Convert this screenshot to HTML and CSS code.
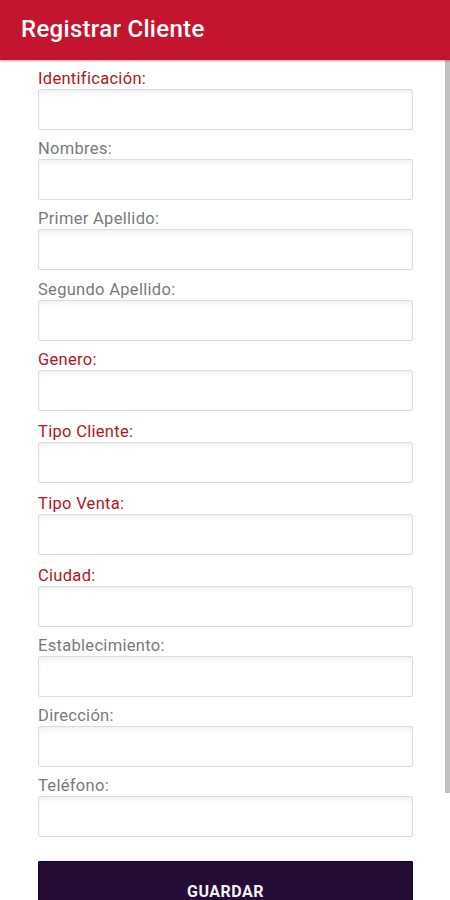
FILE: index.html
```html
<!DOCTYPE html>
<html lang="es">
<head>
<meta charset="utf-8">
<title>Registrar Cliente</title>
<link rel="stylesheet" href="styles.css">
</head>
<body>
<header class="appbar">
  <h1 class="title">Registrar Cliente</h1>
</header>
<main class="content">
  <form class="form">
    <div class="field"><label class="label req">Identificación:</label><input class="input" type="text"></div>
    <div class="field"><label class="label">Nombres:</label><input class="input" type="text"></div>
    <div class="field"><label class="label">Primer Apellido:</label><input class="input" type="text"></div>
    <div class="field mt1"><label class="label">Segundo Apellido:</label><input class="input" type="text"></div>
    <div class="field"><label class="label req">Genero:</label><input class="input" type="text"></div>
    <div class="field mt2"><label class="label req">Tipo Cliente:</label><input class="input" type="text"></div>
    <div class="field mt2"><label class="label req">Tipo Venta:</label><input class="input" type="text"></div>
    <div class="field mt2"><label class="label req">Ciudad:</label><input class="input" type="text"></div>
    <div class="field"><label class="label">Establecimiento:</label><input class="input" type="text"></div>
    <div class="field"><label class="label">Dirección:</label><input class="input" type="text"></div>
    <div class="field"><label class="label">Teléfono:</label><input class="input" type="text"></div>
    <button class="save" type="button">GUARDAR</button>
  </form>
  <div class="scroll-thumb"></div>
</main>
</body>
</html>
```

FILE: styles.css
```css
html, body {
  margin: 0;
  padding: 0;
  height: 900px;
  overflow: hidden;
  background: #ffffff;
  font-family: Roboto, "Liberation Sans", Arial, sans-serif;
}

.appbar {
  height: 60px;
  background: #c4152f;
  display: flex;
  align-items: center;
  padding-left: 21px;
  box-shadow: 0 1px 2px rgba(0, 0, 0, 0.35);
  position: relative;
  z-index: 2;
}

.title {
  margin: 0;
  color: #ffffff;
  font-size: 24px;
  font-weight: 500;
  letter-spacing: 0.3px;
  line-height: 1;
  padding-bottom: 2px;
}

.content {
  position: relative;
}

.form {
  display: flex;
  flex-direction: column;
  padding: 9px 37px 0 38px;
}

.field {
  display: flex;
  flex-direction: column;
  margin-bottom: 9px;
}

.mt1 { margin-top: 1px; }
.mt2 { margin-top: 2px; }

.label {
  font-size: 16.5px;
  line-height: 20px;
  letter-spacing: 0.3px;
  color: #7a7a7a;
}

.label.req {
  color: #b3141f;
}

.input {
  box-sizing: border-box;
  height: 41px;
  width: 375px;
  margin: 0;
  border: 1px solid #dcdcdc;
  border-radius: 2px;
  background: #ffffff;
  box-shadow: inset 0 4px 6px -2px rgba(0, 0, 0, 0.07);
  outline: none;
}

.save {
  margin-top: 15px;
  width: 375px;
  height: 60px;
  background: #230d35;
  color: #f2f2f2;
  border: 1px solid #14061f;
  border-radius: 1px;
  font-family: Roboto, "Liberation Sans", Arial, sans-serif;
  font-size: 16px;
  font-weight: 700;
  letter-spacing: 0.5px;
  padding: 0;
}

.scroll-thumb {
  position: absolute;
  top: 0;
  right: 0;
  width: 5px;
  height: 733px;
  background: #c2c2c2;
}
```
